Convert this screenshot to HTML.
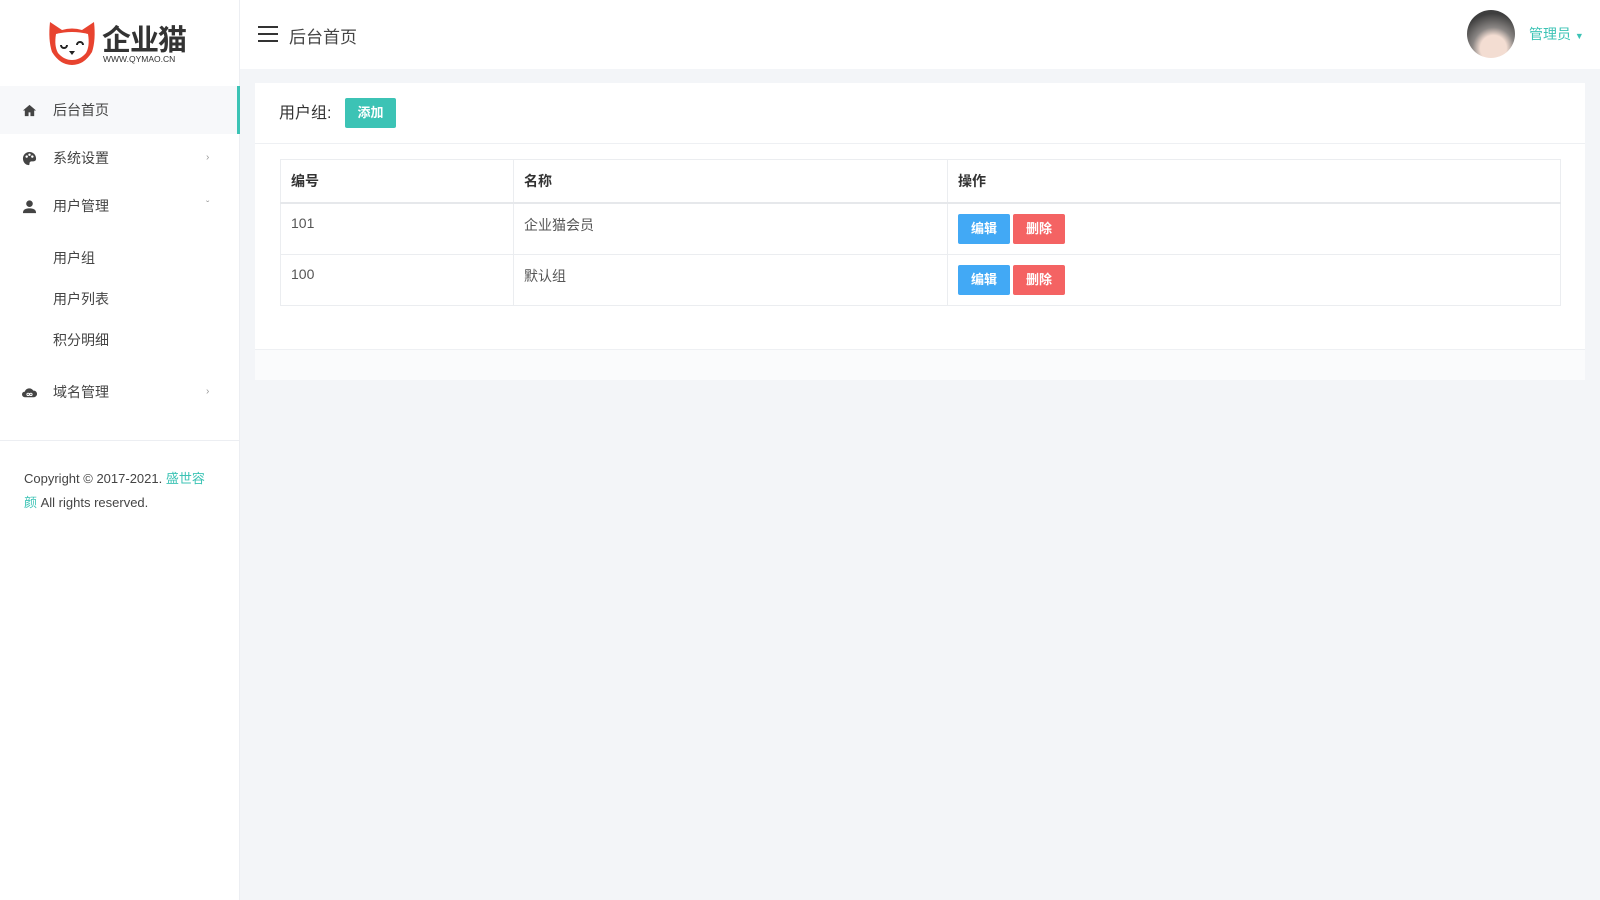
<!DOCTYPE html>
<html><head><meta charset="utf-8"><style>
*{margin:0;padding:0;box-sizing:border-box}
body{width:1600px;height:900px;background:#f3f5f8;font-family:"Liberation Sans","Noto Sans CJK SC",sans-serif;color:#333;position:relative;overflow:hidden;font-size:14px}
.side{position:absolute;left:0;top:0;width:240px;height:900px;background:#fff;border-right:1px solid #eceef2}
.top{position:absolute;left:240px;top:0;right:0;height:69px;background:#fff}
.abs{position:absolute}
.mi{position:absolute;left:0;width:240px;height:48px;line-height:48px;color:#444;font-size:14px}
.mi .t{position:absolute;left:53px}
.mi .ic{position:absolute;left:22px;top:17px;width:15px;height:15px}
.mi .ar{position:absolute;left:206px;font-size:10px;color:#999}
.sub{position:absolute;left:53px;font-size:14px;color:#444}
.card{position:absolute;left:255px;top:83px;width:1330px;height:297px;background:#fff}
table{position:absolute;left:25px;top:76px;width:1281px;border-collapse:collapse;font-size:14px}
td,th{border:1px solid #ebedf0;text-align:left;padding:0 10px;font-weight:normal;vertical-align:top}
th{height:42px;line-height:42px;font-weight:bold;border-bottom:2px solid #e6e8eb;color:#333}
td{height:51px;padding-top:11px;color:#555}
td .btn{margin-top:-1px}
.btn{display:inline-block;width:52px;height:30px;line-height:30px;text-align:center;color:#fff;border-radius:2px;font-size:13px;margin-right:3px;font-weight:bold}
</style></head><body>
<div class="side">
  <svg class="abs" style="left:46px;top:20px" width="52" height="46" viewBox="0 0 52 46"><path d="M4 2 L16 10 Q26 7 36 10 L48 2 Q50 20 46 32 Q38 45 26 45 Q14 45 6 32 Q2 20 4 2Z" fill="#e8432f"/><path d="M10 14 Q26 10 42 14 Q44 26 40 33 Q34 40 26 40 Q18 40 12 33 Q8 26 10 14Z" fill="#fff"/><path d="M15 25 a3 3 0 0 0 6 0" fill="none" stroke="#222" stroke-width="2"/><path d="M31 25 a3 3 0 0 1 6 0" fill="none" stroke="#222" stroke-width="2"/><path d="M23 31 L29 31 L26 35Z" fill="#222"/></svg>
  <div class="abs" style="left:102px;top:17px;font-size:29px;font-weight:bold;color:#333;letter-spacing:-1px">企业猫</div>
  <div class="abs" style="left:103px;top:54px;font-size:8.5px;color:#333">WWW.QYMAO.CN</div>
  <div class="mi" style="top:86px;background:#f7f8fa;border-right:3px solid #3cc3b5"><svg class="ic" viewBox="0 0 16 16"><path d="M8 2L1 8h2v6h4v-4h2v4h4V8h2z" fill="#444"/></svg><span class="t">后台首页</span></div>
  <div class="mi" style="top:134px"><svg class="ic" viewBox="0 0 16 16"><path d="M8 1C4 1 1 4 1 8s3 7 6 7c1 0 1-1 1-2s1-2 2-2h2c2 0 3-1 3-3 0-4-3-7-7-7z" fill="#444"/><circle cx="5" cy="6" r="1.3" fill="#fff"/><circle cx="8" cy="4" r="1.3" fill="#fff"/><circle cx="11" cy="6" r="1.3" fill="#fff"/></svg><span class="t">系统设置</span><span class="ar">›</span></div>
  <div class="mi" style="top:182px"><svg class="ic" viewBox="0 0 16 16"><circle cx="8" cy="5" r="3.5" fill="#444"/><path d="M1 15c0-4 3-5 7-5s7 1 7 5z" fill="#444"/></svg><span class="t">用户管理</span><span class="ar">ˇ</span></div>
  <div class="sub" style="top:248px">用户组</div>
  <div class="sub" style="top:289px">用户列表</div>
  <div class="sub" style="top:330px">积分明细</div>
  <div class="mi" style="top:368px"><svg class="ic" viewBox="0 0 16 16"><path d="M3 13a3 3 0 010-6 5 5 0 019-1 3.5 3.5 0 011 7z" fill="#444"/><circle cx="6.5" cy="10" r="1.3" fill="none" stroke="#fff"/><circle cx="9.5" cy="10" r="1.3" fill="none" stroke="#fff"/></svg><span class="t">域名管理</span><span class="ar">›</span></div>
  <div class="abs" style="left:0;top:440px;width:240px;height:1px;background:#eceef2"></div>
  <div class="abs" style="left:24px;top:467px;width:190px;font-size:13px;line-height:24px;color:#444">Copyright © 2017-2021. <span style="color:#3cc3b5">盛世容颜</span> All rights reserved.</div>
</div>
<div class="top">
  <svg class="abs" style="left:18px;top:26px" width="20" height="16"><path d="M0 1h20M0 8h20M0 15h20" stroke="#333" stroke-width="2"/></svg>
  <div class="abs" style="left:49px;top:23px;font-size:17px;color:#444">后台首页</div>
  <div class="abs" style="left:1227px;top:10px;width:48px;height:48px;border-radius:50%;background:radial-gradient(circle at 55% 80%,#f3ddd2 0 28%,#8a8684 45%,#3e3e3e 75%)"></div>
  <div class="abs" style="left:1289px;top:24px;font-size:14px;color:#3cc3b5">管理员 <span style="font-size:9px">▼</span></div>
</div>
<div class="card">
  <div class="abs" style="left:24px;top:16px;font-size:16px;color:#333">用户组:</div>
  <div class="abs" style="left:90px;top:15px;width:51px;height:30px;line-height:30px;text-align:center;background:#3cc3b5;color:#fff;border-radius:2px;font-size:13px;font-weight:bold">添加</div>
  <div class="abs" style="left:0;top:60px;width:1330px;height:1px;background:#eef0f3"></div>
  <table>
    <tr><th style="width:233px">编号</th><th style="width:434px">名称</th><th>操作</th></tr>
    <tr><td>101</td><td>企业猫会员</td><td><span class="btn" style="background:#42a9f5">编辑</span><span class="btn" style="background:#f46363">删除</span></td></tr>
    <tr><td>100</td><td>默认组</td><td><span class="btn" style="background:#42a9f5">编辑</span><span class="btn" style="background:#f46363">删除</span></td></tr>
  </table>
  <div class="abs" style="left:0;top:266px;width:1330px;height:31px;background:#fafbfc;border-top:1px solid #eef0f3"></div>
</div>
</body></html>
